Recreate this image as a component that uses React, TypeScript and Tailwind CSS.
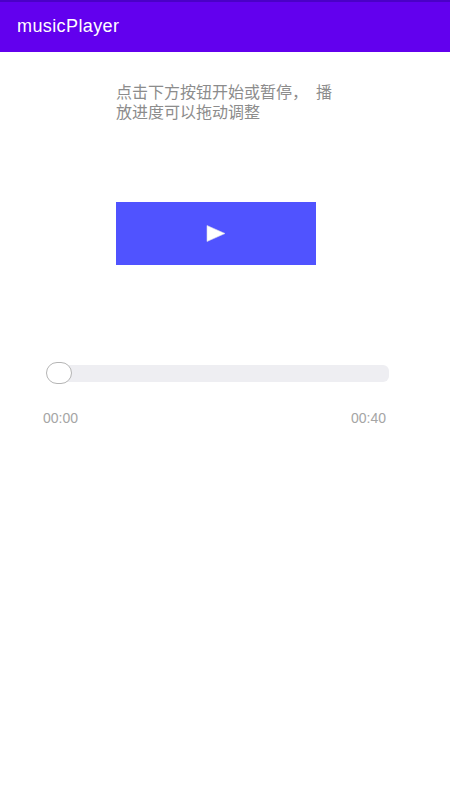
export default function App() {
  return (
    <div className="w-[450px] h-[800px] bg-white font-['Liberation_Sans','Noto_Sans_CJK_SC',sans-serif]">
      <div className="h-[52px] bg-[#6200ee] border-t-2 border-[#4a00c6] flex items-center pl-[17px]">
        <span className="text-white text-[18px] tracking-[0.4px] pb-[2px]">musicPlayer</span>
      </div>

      <div className="pl-[116px] pt-[29px]">
        <p className="w-[222px] text-[16px] leading-[20px] text-[#8c8c8c] font-['Noto_Sans_CJK_SC',sans-serif]">
          点击下方按钮开始或暂停，{"\u2002"}播放进度可以拖动调整
        </p>
      </div>

      <div className="pl-[116px] pt-[81px]">
        <button className="w-[200px] h-[63px] bg-[#5053ff] flex items-center justify-center">
          <svg width="20" height="17" viewBox="0 0 20 17">
            <polygon points="1,0.5 19,8.5 1,16.5" fill="#ffffff" stroke="#d8d8e8" strokeWidth="0.6" />
          </svg>
        </button>
      </div>

      <div className="px-[46px] pt-[97px]">
        <div className="relative h-[22px] flex items-center">
          <div className="ml-[12px] flex-1 mr-[15px] h-[17px] rounded-[6px] bg-[#eeeef2]" />
          <div className="absolute left-0 top-0 w-[26px] h-[22px] rounded-full bg-white border border-[#b5b5b5]" />
        </div>
        <div className="flex justify-between mt-[24px] -ml-[3px] mr-[18px] text-[14px] text-[#a5a5a5]">
          <span>00:00</span>
          <span>00:40</span>
        </div>
      </div>
    </div>
  )
}
